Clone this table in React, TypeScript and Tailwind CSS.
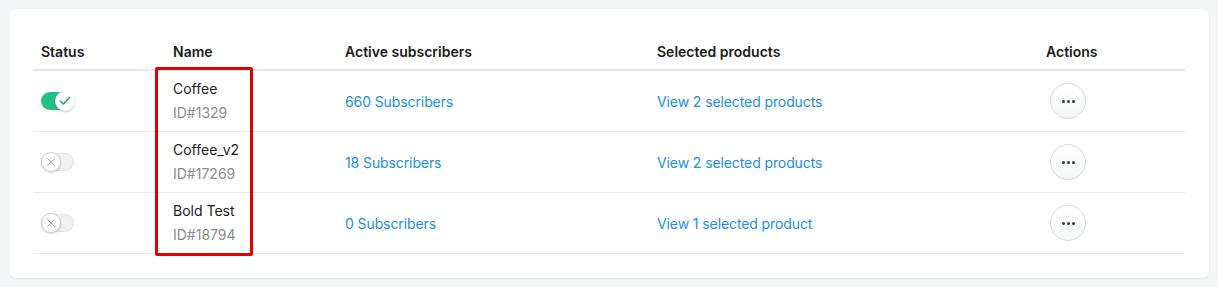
import { Check, X } from "lucide-react";

const rows = [
  { on: true, name: "Coffee", id: "ID#1329", subs: "660 Subscribers", products: "View 2 selected products" },
  { on: false, name: "Coffee_v2", id: "ID#17269", subs: "18 Subscribers", products: "View 2 selected products" },
  { on: false, name: "Bold Test", id: "ID#18794", subs: "0 Subscribers", products: "View 1 selected product" },
];

const cols = "grid grid-cols-[132px_172px_312px_389px_1fr]";

function Toggle({ on }: { on: boolean }) {
  if (on) {
    return (
      <div className="relative w-[33px] h-[18px] rounded-full bg-[#21c085]">
        <div className="absolute -right-[1px] -top-[1px] w-[20px] h-[20px] rounded-full bg-white shadow-[0_1px_2px_rgba(0,0,0,0.25)] flex items-center justify-center">
          <Check size={14} strokeWidth={2.5} className="text-[#1f9f70]" />
        </div>
      </div>
    );
  }
  return (
    <div className="relative w-[33px] h-[18px] rounded-full bg-[#eef0f2] border border-[#e1e3e6]">
      <div className="absolute -left-[1px] -top-[2px] w-[20px] h-[20px] rounded-full bg-white border border-[#c9ccd1] shadow-[0_1px_2px_rgba(0,0,0,0.15)] flex items-center justify-center">
        <X size={14} strokeWidth={1.6} className="text-[#9aa1ab]" />
      </div>
    </div>
  );
}

function MoreButton() {
  return (
    <button className="w-[36px] h-[36px] rounded-full border border-[#d6d8db] bg-gradient-to-b from-white to-[#f5f6f7] flex items-center justify-center gap-[2px]">
      <span className="w-[3px] h-[3px] rounded-full bg-[#3a3a3a]" />
      <span className="w-[3px] h-[3px] rounded-full bg-[#3a3a3a]" />
      <span className="w-[3px] h-[3px] rounded-full bg-[#3a3a3a]" />
    </button>
  );
}

export default function App() {
  return (
    <div
      className="min-h-[287px] bg-[#f4f5f7] p-[9px]"
      style={{ fontFamily: "Inter, 'Noto Sans', sans-serif" }}
    >
      <div className="relative w-[1200px] bg-white rounded-[7px] shadow-[0_1px_2px_rgba(0,0,0,0.06)] p-6 text-[14px] text-[#1c1c1c]">
        <div className={`${cols} h-[38px] items-center border-b-2 border-[#e6e7eb] font-semibold text-[#1a1a1a]`}>
          <div className="px-2">Status</div>
          <div className="px-2">Name</div>
          <div className="px-2">Active subscribers</div>
          <div className="px-2">Selected products</div>
          <div className="px-2">Actions</div>
        </div>
        {rows.map((r) => (
          <div key={r.id} className={`${cols} h-[61px] items-center border-b border-[#e8e9ec]`}>
            <div className="px-2">
              <Toggle on={r.on} />
            </div>
            <div className="px-2 flex flex-col leading-[24px]">
              <span>{r.name}</span>
              <span className="text-[#8c8c8c]">{r.id}</span>
            </div>
            <div className="px-2">
              <a className="text-[#1a8de9] tracking-[-0.1px] cursor-pointer">{r.subs}</a>
            </div>
            <div className="px-2">
              <a className="text-[#1a8de9] tracking-[-0.1px] cursor-pointer">{r.products}</a>
            </div>
            <div className="px-2 pl-3">
              <MoreButton />
            </div>
          </div>
        ))}
        <div className="absolute left-[146px] top-[58px] w-[98px] h-[189px] border-[3px] border-[#e00000] rounded-[2px] pointer-events-none" />
      </div>
    </div>
  );
}
